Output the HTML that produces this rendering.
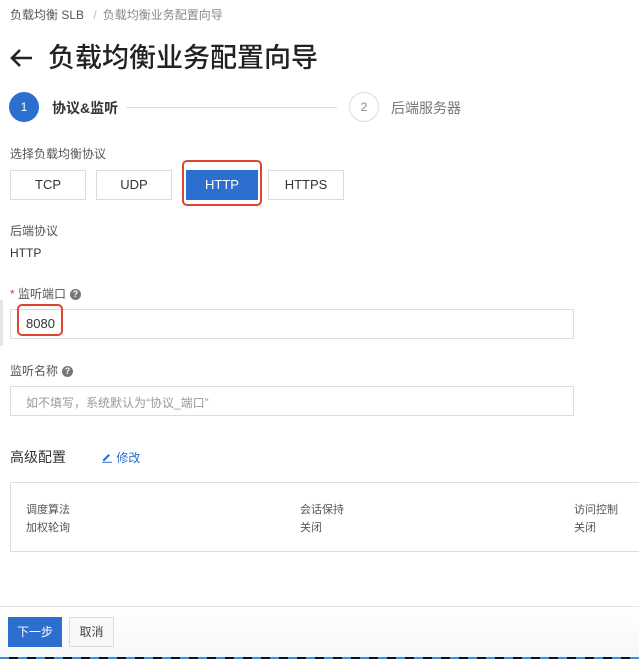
<!DOCTYPE html>
<html><head><meta charset="utf-8"><style>
*{margin:0;padding:0;box-sizing:border-box}
body{width:639px;height:659px;overflow:hidden;background:#fff;font-family:"Liberation Sans","Noto Sans CJK SC",sans-serif;color:#333;position:relative}
.a{position:absolute;white-space:nowrap}
.btn{position:absolute;top:170px;height:30px;border:1px solid #dcdcdc;background:#fff;font-size:13px;text-align:center;line-height:28px;color:#333}
.inp{position:absolute;left:10px;width:564px;height:30px;border:1px solid #dcdcdc;background:#fff}
.q{display:inline-block;width:11px;height:11px;border-radius:50%;background:#777;color:#fff;font-size:9px;line-height:11px;text-align:center;vertical-align:1px;margin-left:4px;font-weight:bold}
</style></head><body>
<div class="a" style="left:10px;top:6px;font-size:12px;color:#555">负载均衡 SLB <span style="color:#bbb;margin:0 6px">/</span><span style="color:#888">负载均衡业务配置向导</span></div>
<svg class="a" style="left:9px;top:48px" width="24" height="20" viewBox="0 0 24 20"><path d="M23 10H3M11 2L3 10l8 8" fill="none" stroke="#222" stroke-width="2.6"/></svg>
<div class="a" style="left:48px;top:40px;font-size:27px;color:#222;line-height:36px;font-weight:500">负载均衡业务配置向导</div>
<div class="a" style="left:9px;top:92px;width:30px;height:30px;border-radius:50%;background:#2d6fcf;color:#fff;font-size:12px;text-align:center;line-height:30px">1</div>
<div class="a" style="left:52px;top:98px;font-size:14px;font-weight:bold;color:#333">协议&amp;监听</div>
<div class="a" style="left:126px;top:107px;width:211px;height:1px;background:#ddd"></div>
<div class="a" style="left:349px;top:92px;width:30px;height:30px;border-radius:50%;border:1px solid #ddd;color:#888;font-size:12px;text-align:center;line-height:28px">2</div>
<div class="a" style="left:391px;top:98px;font-size:14px;color:#777">后端服务器</div>
<div class="a" style="left:10px;top:145px;font-size:12px;color:#555">选择负载均衡协议</div>
<div class="btn" style="left:10px;width:76px">TCP</div>
<div class="btn" style="left:96px;width:76px">UDP</div>
<div class="btn" style="left:186px;width:72px;background:#2d6fcf;border-color:#2d6fcf;color:#fff">HTTP</div>
<div class="btn" style="left:268px;width:76px">HTTPS</div>
<div class="a" style="left:182px;top:160px;width:80px;height:46px;border:2px solid #e0432f;border-radius:5px"></div>
<div class="a" style="left:10px;top:222px;font-size:12px;color:#555">后端协议</div>
<div class="a" style="left:10px;top:246px;font-size:12px;color:#333">HTTP</div>
<div class="a" style="left:10px;top:285px;font-size:12px;color:#555"><span style="color:#e0432f">*</span> 监听端口<span class="q">?</span></div>
<div class="inp" style="top:309px"></div>
<div class="a" style="left:26px;top:316px;font-size:13px;color:#333">8080</div>
<div class="a" style="left:17px;top:304px;width:46px;height:32px;border:2px solid #e0432f;border-radius:5px"></div>
<div class="a" style="left:0;top:300px;width:3px;height:46px;background:#e6e6e6"></div>
<div class="a" style="left:10px;top:362px;font-size:12px;color:#555">监听名称<span class="q">?</span></div>
<div class="inp" style="top:386px"></div>
<div class="a" style="left:26px;top:394px;font-size:12px;color:#999">如不填写，系统默认为“协议_端口”</div>
<div class="a" style="left:10px;top:447px;font-size:14px;color:#333">高级配置</div>
<div class="a" style="left:101px;top:449px;font-size:12px;color:#2d6fcf"><svg width="12" height="12" viewBox="0 0 12 12" style="vertical-align:-1px"><path d="M2 8.5L7.5 3l1.5 1.5L3.5 10H2z" fill="#2d6fcf"/><path d="M1 11.3h10" stroke="#2d6fcf" stroke-width="1"/></svg> 修改</div>
<div class="a" style="left:10px;top:482px;width:640px;height:70px;border:1px solid #ddd"></div>
<div class="a" style="left:26px;top:501px;font-size:11px;color:#555;line-height:18px">调度算法<br>加权轮询</div>
<div class="a" style="left:300px;top:501px;font-size:11px;color:#555;line-height:18px">会话保持<br>关闭</div>
<div class="a" style="left:574px;top:501px;font-size:11px;color:#555;line-height:18px">访问控制<br>关闭</div>
<div class="a" style="left:0;top:606px;width:639px;height:51px;border-top:1px solid #e3e3e3;background:linear-gradient(#fff,#f7f7f7)"></div>
<div class="a" style="left:8px;top:617px;width:54px;height:30px;background:#2d6fcf;color:#fff;font-size:12px;text-align:center;line-height:30px">下一步</div>
<div class="a" style="left:69px;top:617px;width:45px;height:30px;border:1px solid #ddd;background:#f8f8f8;color:#444;font-size:12px;text-align:center;line-height:28px">取消</div>
<div class="a" style="left:0;top:657px;width:639px;height:2px;background:repeating-linear-gradient(90deg,#3a8ee6 0 9px,#111 9px 18px)"></div>
</body></html>
